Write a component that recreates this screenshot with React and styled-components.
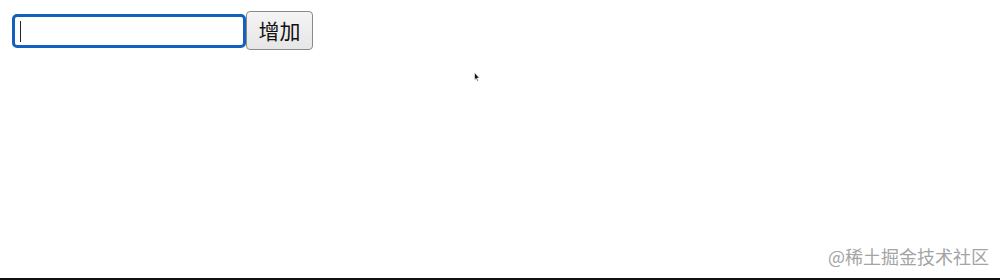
import styled, { createGlobalStyle } from "styled-components";

const GlobalStyle = createGlobalStyle`
  html, body {
    margin: 0;
    padding: 0;
    background: #fff;
  }
  body {
    font-family: "Liberation Sans", "Noto Sans CJK SC", sans-serif;
  }
`;

const Page = styled.div`
  position: relative;
  width: 1000px;
  height: 280px;
  display: flex;
  flex-direction: column;
  justify-content: space-between;
  box-sizing: border-box;
  border-bottom: 2px solid #111;
  overflow: hidden;
`;

const Toolbar = styled.div`
  display: flex;
  align-items: center;
  padding: 11px 0 0 12px;
`;

const Field = styled.div`
  position: relative;
  width: 234px;
  height: 34px;
  box-sizing: border-box;
  border: 3px solid #1360bf;
  border-radius: 5px;
  background: #fff;
`;

const Input = styled.input`
  width: 100%;
  height: 100%;
  box-sizing: border-box;
  border: none;
  outline: none;
  background: transparent;
  padding: 0 6px;
  font-size: 18px;
  caret-color: transparent;
`;

const Caret = styled.span`
  position: absolute;
  left: 5px;
  top: 4px;
  width: 1px;
  height: 21px;
  background: #222;
`;

const AddButton = styled.button`
  width: 67px;
  height: 39px;
  box-sizing: border-box;
  margin: 0;
  padding: 0;
  border: 1px solid #8a8a8a;
  border-radius: 4px;
  background: linear-gradient(#f4f4f4, #e6e6e6);
  color: #111;
  font-size: 21px;
  font-family: "Noto Sans CJK SC", sans-serif;
  line-height: 1;
`;

const Footer = styled.div`
  display: flex;
  justify-content: flex-end;
  padding: 0 11px 9px 0;
`;

const Watermark = styled.span`
  color: #a4a4a4;
  font-size: 18px;
  font-family: "Noto Sans CJK SC", sans-serif;
`;

const Cursor = styled.svg`
  position: absolute;
  left: 474px;
  top: 72px;
`;

export default function App() {
  return (
    <>
      <GlobalStyle />
      <Page>
        <Toolbar>
          <Field>
            <Input type="text" />
            <Caret />
          </Field>
          <AddButton>增加</AddButton>
        </Toolbar>
        <Footer>
          <Watermark>@稀土掘金技术社区</Watermark>
        </Footer>
        <Cursor width="6" height="10" viewBox="0 0 6 10">
          <path d="M0.5 0.5 L0.5 8 L2.2 6.4 L3.4 9.2 L4.3 8.8 L3.2 6.1 L5.4 6.1 Z" fill="#111" stroke="#fff" strokeWidth="0.6" />
        </Cursor>
      </Page>
    </>
  );
}
